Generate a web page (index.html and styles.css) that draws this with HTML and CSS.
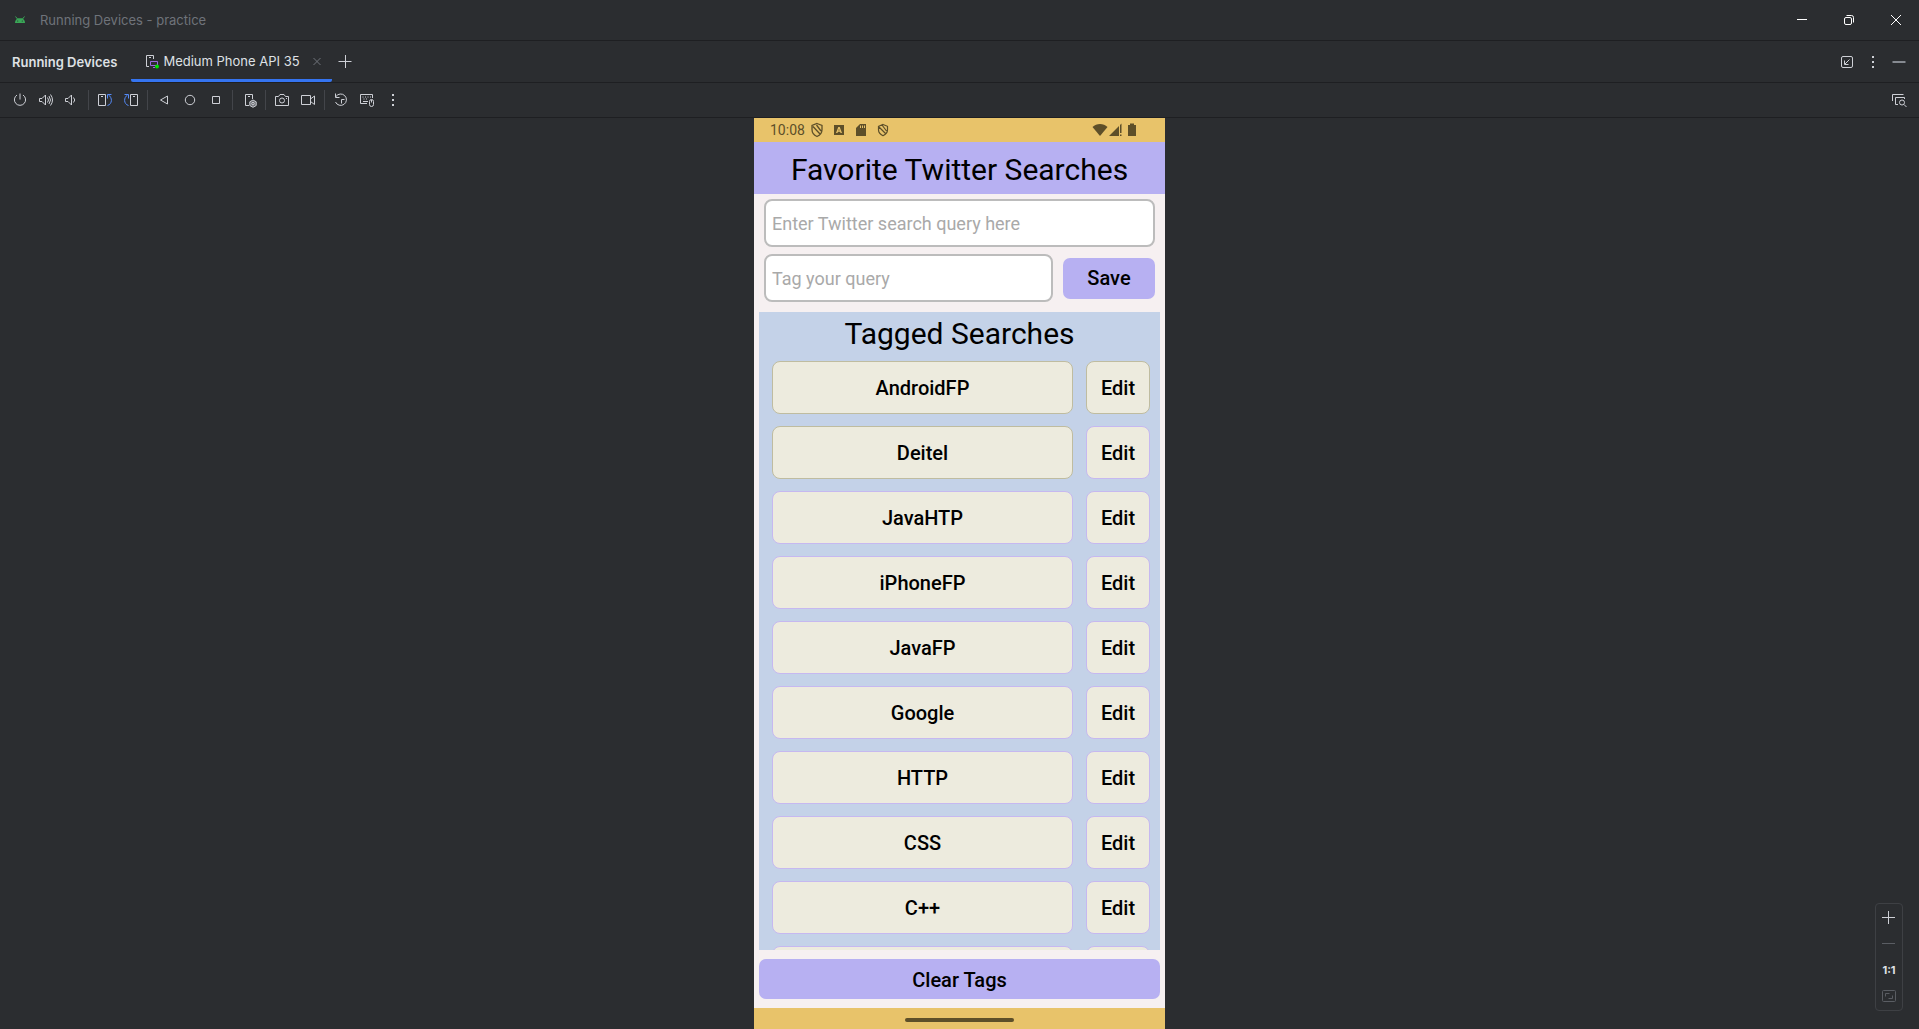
FILE: index.html
```html
<!DOCTYPE html>
<html lang="en">
<head>
<meta charset="utf-8">
<title>Running Devices - practice</title>
<link rel="stylesheet" href="styles.css">
</head>
<body>
<div class="window">
  <header class="titlebar">
    <svg class="icon droid" viewBox="0 0 16 16"><path d="M3 11C3 8.500 4.300 6.800 6 6.200h4C11.700 6.800 13 8.500 13 11z" fill="#3aa757"/><path d="M3.500 4.500l2 2.500M12.500 4.500l-2 2.500" stroke="#3aa757"/><circle cx="5.700" cy="9" r=".6" fill="#2b2d30"/><circle cx="10.300" cy="9" r=".6" fill="#2b2d30"/></svg>
    <span class="title">Running Devices - practice</span>
    <div class="window-buttons">
      <button aria-label="Minimize"><svg class="icon" viewBox="0 0 16 16"><path d="M3 7.500h10"/></svg></button>
      <button aria-label="Restore"><svg class="icon" viewBox="0 0 16 16"><rect x="3.500" y="5.500" width="7" height="7" rx="1.500"/><path d="M5.500 3.500h5a2 2 0 0 1 2 2v5"/></svg></button>
      <button aria-label="Close"><svg class="icon" viewBox="0 0 16 16"><path d="M3 3l10 10M13 3L3 13"/></svg></button>
    </div>
  </header>

  <div class="tabbar">
    <h1 class="tool-name">Running Devices</h1>
    <div class="tab">
      <svg class="icon" viewBox="0 0 16 16"><path d="M5 13.500H2.500v-11h7V6M5 4.500h2"/><path d="M6.500 8.500h7v4h-7zM9 14.500h2" stroke="#9c6ade"/><circle cx="13" cy="13.500" r="2" fill="#00e500" stroke="none"/></svg>
      <span>Medium Phone API 35</span>
      <button class="tab-close" aria-label="Close tab"><svg class="icon" viewBox="0 0 16 16"><path d="M4.500 5l7 7M11.500 5l-7 7"/></svg></button>
    </div>
    <button class="tab-add" aria-label="New tab"><svg class="icon" viewBox="0 0 16 16"><path d="M1.500 7.500h13M8.500 1v13"/></svg></button>
    <div class="tab-tools">
      <button aria-label="Dock"><svg class="icon" viewBox="0 0 16 16"><rect x="2.500" y="2.500" width="11" height="11" rx="1.500"/><path d="M10.500 5.500L6 10M5.500 6.500v4h4"/></svg></button>
      <button aria-label="Options"><svg class="icon dots" viewBox="0 0 16 16"><path d="M7 2h2v2H7zM7 7h2v2H7zM7 12h2v2H7z"/></svg></button>
      <button aria-label="Hide"><svg class="icon hide" viewBox="0 0 16 16"><path d="M1.500 8h13" stroke-width="2"/></svg></button>
    </div>
  </div>

  <div class="toolbar">
    <button aria-label="Power"><svg class="icon" viewBox="0 0 16 16"><path d="M8 1.500v6M5 3a5.600 5.600 0 1 0 6 0"/></svg></button>
    <button aria-label="Volume up"><svg class="icon" viewBox="0 0 16 16"><path d="M1.500 6.500h2.500l3.500-3.500v10L4 9.500H1.500zM9.500 5.500q2 2.500 0 5M11 4q3 4 0 8M12.500 2.500q4 5.500 0 11"/></svg></button>
    <button aria-label="Volume down"><svg class="icon" viewBox="0 0 16 16"><path d="M1.500 6.500H4l3.500-3.500v10L4 9.500H1.500zM9.500 5.500q2.500 2.500 0 5"/></svg></button>
    <i class="sep"></i>
    <button aria-label="Rotate left"><svg class="icon" viewBox="0 0 16 16"><path d="M1.500 2.500h7v11h-7zM4 4.500h2"/><path class="blue" d="M10.500 13.500c5-1.500 5-8 1-10.500M10.500 6.500V2.500h4"/></svg></button>
    <button aria-label="Rotate right"><svg class="icon" viewBox="0 0 16 16"><path d="M7.500 2.500h7v11h-7zM10 4.500h2"/><path class="blue" d="M5.500 13.500c-5-1.500-5-8-1-10.500M5.500 6.500V2.500h-4"/></svg></button>
    <i class="sep"></i>
    <button aria-label="Back"><svg class="icon" viewBox="0 0 16 16"><path d="M11.500 4v8L4.500 8z"/></svg></button>
    <button aria-label="Home"><svg class="icon" viewBox="0 0 16 16"><circle cx="8" cy="8" r="4.700"/></svg></button>
    <button aria-label="Overview"><svg class="icon" viewBox="0 0 16 16"><path d="M4.500 4.500h7v7h-7z"/></svg></button>
    <i class="sep"></i>
    <button aria-label="Device settings"><svg class="icon" viewBox="0 0 16 16"><path d="M8 13.500H4.500v-11h7V7M7 4.500h2"/><path d="M12 8l3.200 1.800v3.700L12 15.300l-3.200-1.800V9.800z" fill="#6b6d72"/><circle cx="12" cy="11.600" r="1.300"/></svg></button>
    <i class="sep"></i>
    <button aria-label="Screenshot"><svg class="icon" viewBox="0 0 16 16"><path d="M1.500 4.500h3L6 2.500h4l1.500 2h3v9h-13z"/><circle cx="8" cy="8.500" r="2.500"/><path d="M12 6.500h1"/></svg></button>
    <button aria-label="Record screen"><svg class="icon" viewBox="0 0 16 16"><path d="M1.500 3.500h9v9h-9zM10.500 7l4-3v8.500l-4-3"/></svg></button>
    <i class="sep"></i>
    <button aria-label="Snapshots"><svg class="icon" viewBox="0 0 16 16"><path d="M3 4.500a5.700 5.700 0 1 1-.5 5.500M2.500 1.500v4h4M8.500 11.500v-4h3"/></svg></button>
    <button aria-label="Hardware input"><svg class="icon" viewBox="0 0 16 16"><path d="M8 11.500H1.500v-9h12V6M3.500 5h1M6 5h1M8.500 5h1M11 5h1M4.500 7h1M7 7h1M4 9.500h5"/><rect x="10.500" y="7.500" width="4" height="7" rx="2"/><path d="M12.500 8v2.500"/></svg></button>
    <button aria-label="More"><svg class="icon dots" viewBox="0 0 16 16"><path d="M7 2h2v2H7zM7 7h2v2H7zM7 12h2v2H7z"/></svg></button>
    <button class="inspect" aria-label="Layout inspector"><svg class="icon" viewBox="0 0 16 16"><path d="M1.500 9V2.500h11M7 12.500H4.500v-7h9V7"/><circle cx="11" cy="10.500" r="2.500"/><path d="M13 12.500l2.500 2.500"/></svg></button>
  </div>

  <main class="stage">
    <section class="phone">
      <div class="status">
        <span class="clock">10:08</span>
        <svg class="icon" viewBox="0 0 16 16"><path d="M8 1.500l5 2v4c0 3.500-2 5.700-5 7-3-1.300-5-3.500-5-7v-4zM4 4.500l7 7.500M7.500 3l4.500 6" stroke-width="1.300"/></svg>
        <svg class="icon solid" viewBox="0 0 16 16"><path fill-rule="evenodd" d="M3 3h10v10H3zM7.300 5L5 11h1.400l.5-1.300h2.200l.5 1.300H11L8.700 5zM8 6.800l.7 1.800H7.300z"/></svg>
        <svg class="icon solid" viewBox="0 0 16 16"><path fill-rule="evenodd" d="M7 2h6v12H3V6zM7 3.500V6h1V3.500zM9 3.500V6h1V3.500zM11 3.500V6h1V3.500z"/></svg>
        <svg class="icon" viewBox="0 0 16 16"><path d="M8 2.500l4.500 1.800v3.500c0 3-1.800 4.700-4.500 5.900-2.700-1.200-4.500-2.900-4.500-5.900V4.300zM4 5l7 7M7 3l4.500 6" stroke-width="1.200"/></svg>
        <svg class="icon solid wifi" viewBox="0 0 16 16"><path d="M8 14L.5 5C4.500 1 11.500 1 15.500 5z"/></svg>
        <svg class="icon solid" viewBox="0 0 16 16"><path d="M1 14L11 4v10zM12 3l1.500-1.500V11H12zM12 12.500h1.500V14H12z"/></svg>
        <svg class="icon solid" viewBox="0 0 16 16"><path d="M6 1.500h4V3h2v11H4V3h2z"/></svg>
      </div>
      <h2 class="app-title">Favorite Twitter Searches</h2>
      <form class="search-form">
        <input class="field" type="text" aria-label="Search query" placeholder="Enter Twitter search query here">
        <div class="tag-row">
          <input class="field" type="text" aria-label="Tag" placeholder="Tag your query">
          <button class="save" type="button">Save</button>
        </div>
      </form>
      <div class="tags">
        <h3>Tagged Searches</h3>
        <ul>
          <li><button class="used">AndroidFP</button><button class="used">Edit</button></li>
          <li><button class="used">Deitel</button><button>Edit</button></li>
          <li><button>JavaHTP</button><button>Edit</button></li>
          <li><button>iPhoneFP</button><button>Edit</button></li>
          <li><button>JavaFP</button><button>Edit</button></li>
          <li><button>Google</button><button>Edit</button></li>
          <li><button>HTTP</button><button>Edit</button></li>
          <li><button>CSS</button><button>Edit</button></li>
          <li><button>C++</button><button>Edit</button></li>
          <li><button aria-label="Next tag"></button><button aria-label="Edit next tag"></button></li>
        </ul>
      </div>
      <button class="clear">Clear Tags</button>
      <div class="navbar"><div class="pill"></div></div>
    </section>
    <div class="zoom">
      <button aria-label="Zoom in"><svg class="icon" viewBox="0 0 16 16"><path d="M1 7.500h13M7.500 1v13"/></svg></button>
      <button aria-label="Zoom out"><svg class="icon dim" viewBox="0 0 16 16"><path d="M1 7.500h13"/></svg></button>
      <button>1:1</button>
      <button aria-label="Fit"><svg class="icon dim" viewBox="0 0 16 16"><rect x="1.500" y="2.500" width="13" height="11" rx="1"/><path d="M4.500 8.500v-3h4M11.500 7.500v3h-4"/></svg></button>
    </div>
  </main>
</div>
</body>
</html>
```
FILE: styles.css
```css
* { box-sizing: border-box; }
body { margin: 0; background: #2b2d30; font-family: Inter, sans-serif; font-size: 13px; color: #dfe1e5; }
h1, h2, h3, ul { margin: 0; padding: 0; font-weight: 400; list-style: none; }
button { font: inherit; color: inherit; background: none; border: 0; padding: 0; display: flex; align-items: center; justify-content: center; }
.icon { width: 16px; height: 16px; flex: none; fill: none; stroke: #ced0d6; stroke-width: 1; }
.window { height: 100vh; display: flex; flex-direction: column; }

.titlebar, .tabbar, .toolbar { display: flex; align-items: center; flex: none; border-bottom: 1px solid #1e1f22; }
.titlebar { height: 41px; padding: 0 12px; }
.droid { stroke: none; }
.title { margin-left: 12px; color: #6f737a; }
.window-buttons { margin-left: auto; padding-right: 3px; display: flex; gap: 31px; }
.window-buttons .icon { stroke: #ffffff; }

.tabbar { height: 42px; padding: 0 12px; }
.tool-name { font-size: 13px; font-weight: 600; }
.tab { align-self: stretch; display: flex; align-items: center; margin-left: 14px; padding: 2px 7px 0 13px; border-bottom: 3px solid #3574f0; border-radius: 2px; }
.tab span { margin-left: 3px; }
.tab-close { margin-left: 9px; }
.tab-close .icon { stroke: #6f737a; }
.tab-add { margin-left: 5px; }
.tab-tools { margin-left: auto; display: flex; gap: 10px; }
.dots { fill: #ced0d6; stroke: none; }
.hide { stroke: #868a91; }

.toolbar { height: 35px; padding: 0 7px; }
.toolbar button { width: 26px; height: 26px; }
.sep { width: 1px; height: 20px; margin: 0 3px; background: #43454a; }
.toolbar .blue { stroke: #548af7; }
.toolbar .inspect { margin-left: auto; }

.stage { position: relative; flex: 1; min-height: 0; display: flex; justify-content: center; }
.phone { width: 411px; display: flex; flex-direction: column; background: #f6f0f1; color: #000; font-family: Roboto, sans-serif; }
.status { height: 24px; flex: none; display: flex; align-items: center; padding: 0 25px 0 16px; background: #e8c36a; color: #5d4f29; }
.status .icon { stroke: #5d4f29; margin-left: 6px; }
.status .icon.solid { fill: #5d4f29; stroke: none; }
.status .wifi { margin-left: auto; }
.status .wifi ~ .icon { margin-left: 0; }
.status .clock { font-size: 14px; }
.status .clock + .icon { margin-left: 4px; }
.app-title { height: 52px; line-height: 56px; flex: none; text-align: center; font-size: 30px; background: #b7b0f2; }
.search-form { padding: 5px 10px 10px; display: flex; flex-direction: column; gap: 7px; }
.field { display: block; width: 100%; height: 48px; padding: 0 6px; font: 18px Roboto, sans-serif; color: #000; background: #fff; border: 2px solid #bcbcbc; border-radius: 8px; }
.field::placeholder { color: #a9a9a9; }
.tag-row { display: flex; align-items: center; gap: 10px; }
.tag-row .field { flex: 1; min-width: 0; }
.save { width: 92px; height: 41px; border-radius: 7px; background: #b7b0f2; font-size: 20px; font-weight: 500; }
.tags { flex: 1; min-height: 0; overflow: hidden; margin: 0 5px; background: #c4d2e8; }
.tags h3 { height: 49px; line-height: 44px; text-align: center; font-size: 30px; }
.tags ul { display: flex; flex-direction: column; gap: 12px; padding: 0 10px 0 13px; }
.tags li { display: flex; gap: 13px; }
.tags li button { height: 53px; width: 64px; border: 1px solid #c6b8f0; border-radius: 8px; background: #edebde; font-size: 20px; font-weight: 500; }
.tags li button:first-child { flex: 1; }
.tags li .used { border-color: #bfbca0; }
.clear { flex: none; height: 40px; margin: 9px 5px; padding-top: 2px; border-radius: 7px; background: #b7b0f2; font-size: 20px; font-weight: 500; }
.navbar { flex: none; height: 21px; display: flex; align-items: center; justify-content: center; background: #e8c36a; }
.pill { width: 109px; height: 4px; margin-top: 3px; border-radius: 2px; background: #5d4f29; }

.zoom { position: absolute; right: 16px; bottom: 18px; width: 28px; padding: 1px 0; border: 1px solid #3e4044; border-radius: 4px; display: flex; flex-direction: column; }
.zoom button { height: 26px; font-size: 11px; font-weight: 700; }
.zoom .dim { stroke: #5a5d63; }
```
